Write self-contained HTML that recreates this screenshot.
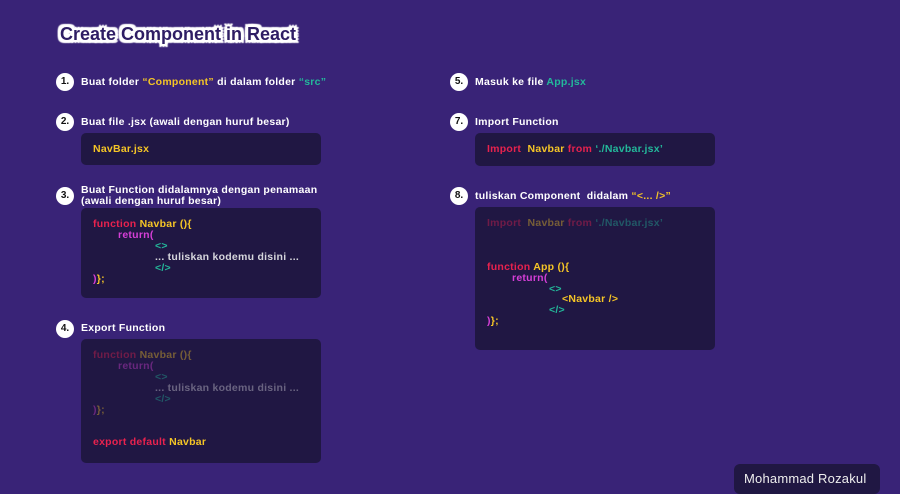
<!DOCTYPE html>
<html><head><meta charset="utf-8"><style>
*{margin:0;padding:0;box-sizing:border-box}
body{width:900px;height:492px;background:#392377;position:relative;overflow:hidden;font-family:"Liberation Sans",sans-serif;font-weight:bold;font-size:10.5px;letter-spacing:.25px;color:#fff}
.a{position:absolute;white-space:nowrap;line-height:11px}
.t{position:absolute;left:60px;top:22px;font-size:18px;letter-spacing:0;color:#2e1d64;line-height:24px;
text-shadow:0 0 2px #fff,2px 0 0 #fff,-2px 0 0 #fff,0 2px 0 #fff,0 -2px 0 #fff,2px 2px 0 #fff,-2px -2px 0 #fff,2px -2px 0 #fff,-2px 2px 0 #fff,3px 0 1px #fff,-3px 0 1px #fff,0 3px 1px #fff,0 -3px 1px #fff,3px 3px 1px #fff,-3px -3px 1px #fff,3px -3px 1px #fff,-3px 3px 1px #fff}
.c{position:absolute;width:18px;height:18px;border-radius:50%;background:#fff;color:#111;font-size:10px;letter-spacing:0;text-align:center;line-height:18px}
.b{position:absolute;background:#201743;border-radius:5px}
.r{color:#e8224e}.y{color:#f5c526}.p{color:#d63fd8}.g{color:#23b89a}.w{color:#d6d6dc}
.f{opacity:.4}
</style></head><body>
<div class="t">Create Component in React</div>

<div class="c" style="left:56px;top:73px">1.</div>
<div class="a" style="left:81px;top:77px">Buat folder <span class="y">“Component”</span> di dalam folder <span class="g">“src”</span></div>

<div class="c" style="left:56px;top:113px">2.</div>
<div class="a" style="left:81px;top:117px">Buat file .jsx (awali dengan huruf besar)</div>
<div class="b" style="left:81px;top:133px;width:240px;height:32px"></div>
<div class="a y" style="left:93px;top:144px">NavBar.jsx</div>

<div class="c" style="left:56px;top:187px">3.</div>
<div class="a" style="left:81px;top:185px">Buat Function didalamnya dengan penamaan</div>
<div class="a" style="left:81px;top:196px">(awali dengan huruf besar)</div>
<div class="b" style="left:81px;top:208px;width:240px;height:90px"></div>
<div class="a" style="left:93px;top:219px"><span class="r">function</span> <span class="y">Navbar ()</span><span class="y">{</span></div>
<div class="a p" style="left:118px;top:230px">return(</div>
<div class="a g" style="left:155px;top:241px">&lt;&gt;</div>
<div class="a w" style="left:155px;top:252px">... tuliskan kodemu disini ...</div>
<div class="a g" style="left:155px;top:263px">&lt;/&gt;</div>
<div class="a" style="left:93px;top:274px"><span class="p">)</span><span class="y">};</span></div>

<div class="c" style="left:56px;top:320px">4.</div>
<div class="a" style="left:81px;top:323px">Export Function</div>
<div class="b" style="left:81px;top:339px;width:240px;height:124px"></div>
<div class="f">
<div class="a" style="left:93px;top:350px"><span class="r">function</span> <span class="y">Navbar (){</span></div>
<div class="a p" style="left:118px;top:361px">return(</div>
<div class="a g" style="left:155px;top:372px">&lt;&gt;</div>
<div class="a w" style="left:155px;top:383px">... tuliskan kodemu disini ...</div>
<div class="a g" style="left:155px;top:394px">&lt;/&gt;</div>
<div class="a" style="left:93px;top:405px"><span class="p">)</span><span class="y">};</span></div>
</div>
<div class="a" style="left:93px;top:437px"><span class="r">export default</span> <span class="y">Navbar</span></div>

<div class="c" style="left:450px;top:73px">5.</div>
<div class="a" style="left:475px;top:77px">Masuk ke file <span class="g">App.jsx</span></div>

<div class="c" style="left:450px;top:113px">7.</div>
<div class="a" style="left:475px;top:117px">Import Function</div>
<div class="b" style="left:475px;top:133px;width:240px;height:33px"></div>
<div class="a" style="left:487px;top:144px"><span class="r">Import</span>&nbsp; <span class="y">Navbar</span> <span class="r">from</span> <span class="g">‘./Navbar.jsx’</span></div>

<div class="c" style="left:450px;top:187px">8.</div>
<div class="a" style="left:475px;top:191px">tuliskan Component&nbsp; didalam <span class="y">“&lt;... /&gt;”</span></div>
<div class="b" style="left:475px;top:207px;width:240px;height:143px"></div>
<div class="a f" style="left:487px;top:218px"><span class="r">Import</span>&nbsp; <span class="y">Navbar</span> <span class="r">from</span> <span class="g">‘./Navbar.jsx’</span></div>
<div class="a" style="left:487px;top:262px"><span class="r">function</span> <span class="y">App (){</span></div>
<div class="a p" style="left:512px;top:273px">return(</div>
<div class="a g" style="left:549px;top:284px">&lt;&gt;</div>
<div class="a y" style="left:562px;top:294px">&lt;Navbar /&gt;</div>
<div class="a g" style="left:549px;top:305px">&lt;/&gt;</div>
<div class="a" style="left:487px;top:316px"><span class="p">)</span><span class="y">};</span></div>

<div class="b" style="left:734px;top:464px;width:146px;height:30px;border-radius:6px"></div>
<div class="a" style="left:744px;top:472px;font-size:13px;letter-spacing:.2px;font-weight:normal;line-height:14px;color:#eee">Mohammad Rozakul</div>
</body></html>
